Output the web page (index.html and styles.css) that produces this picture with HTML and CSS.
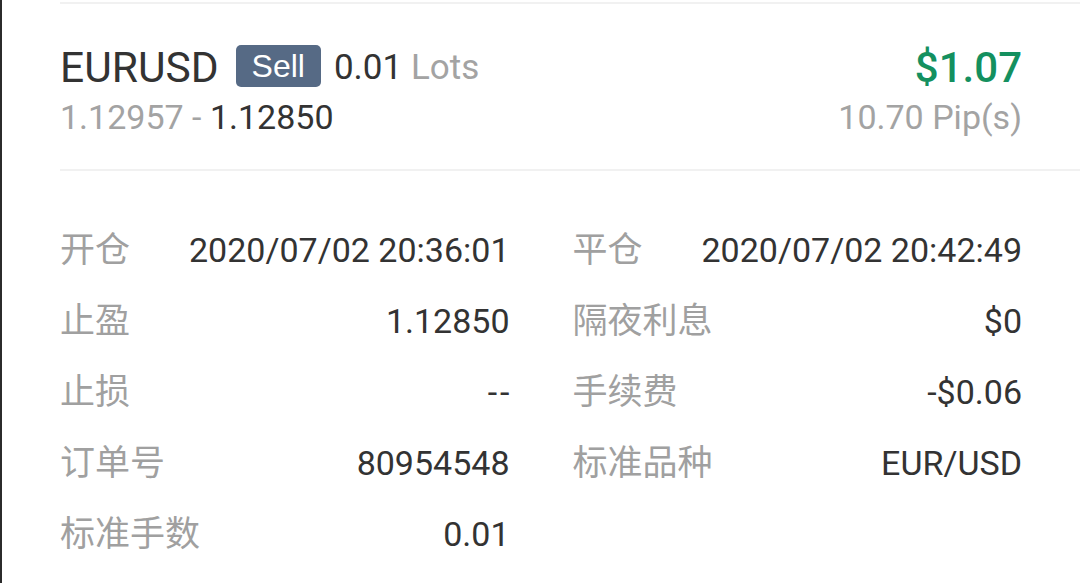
FILE: index.html
```html
<!DOCTYPE html>
<html lang="zh-CN">
<head>
<meta charset="utf-8">
<title>Order detail</title>
<link rel="stylesheet" href="styles.css">
</head>
<body>
<div class="page">
  <section class="summary">
    <div class="sum-left">
      <div class="line1">
        <span class="symbol">EURUSD</span>
        <span class="badge">Sell</span>
        <span class="lots"><span class="dark">0.01</span> Lots</span>
      </div>
      <div class="line2"><span class="grey">1.12957 - </span><span class="dark">1.12850</span></div>
    </div>
    <div class="sum-right">
      <div class="profit">$1.07</div>
      <div class="pips">10.70 Pip(s)</div>
    </div>
  </section>
  <section class="details">
    <div class="row"><span class="label">开仓</span><span class="value">2020/07/02 20:36:01</span></div>
    <div class="row"><span class="label">平仓</span><span class="value">2020/07/02 20:42:49</span></div>
    <div class="row"><span class="label">止盈</span><span class="value">1.12850</span></div>
    <div class="row"><span class="label">隔夜利息</span><span class="value">$0</span></div>
    <div class="row"><span class="label">止损</span><span class="value dash">--</span></div>
    <div class="row"><span class="label">手续费</span><span class="value">-$0.06</span></div>
    <div class="row"><span class="label">订单号</span><span class="value">80954548</span></div>
    <div class="row"><span class="label">标准品种</span><span class="value">EUR/USD</span></div>
    <div class="row"><span class="label">标准手数</span><span class="value">0.01</span></div>
  </section>
</div>
</body>
</html>
```
FILE: styles.css
```css
html, body {
  margin: 0;
  padding: 0;
  background: #ffffff;
}
body {
  font-family: Roboto, "Noto Sans CJK SC", sans-serif;
  color: #333333;
  border-left: 2px solid #2b2b2b;
  min-height: 583px;
  box-sizing: border-box;
  overflow: hidden;
}
.page {
  padding-top: 2px;
}
.summary {
  margin-left: 58px;
  padding: 39px 58px 32px 0;
  border-top: 2px solid #f1f1f1;
  border-bottom: 2px solid #f1f1f1;
  display: flex;
  justify-content: space-between;
}
.line1 {
  display: flex;
  align-items: center;
  height: 50px;
}
.symbol {
  font-size: 42.5px;
  color: #333333;
  line-height: 50px;
}
.badge {
  font-family: "Liberation Sans", Arial, sans-serif;
  font-size: 32px;
  line-height: 42px;
  height: 42px;
  padding: 0 16px;
  margin: 0 13px 4px 17px;
  background: #566a85;
  color: #ffffff;
  border-radius: 5px;
}
.lots {
  font-size: 35px;
  color: #a3a3a3;
  line-height: 50px;
}
.dark { color: #333333; }
.grey { color: #a3a3a3; }
.line2 {
  margin-top: 4px;
  font-size: 34px;
  line-height: 40px;
  white-space: pre;
}
.sum-right {
  text-align: right;
}
.profit {
  font-size: 42px;
  font-weight: 500;
  color: #14905f;
  line-height: 50px;
}
.pips {
  margin-top: 4px;
  font-size: 34px;
  line-height: 40px;
  color: #a3a3a3;
}
.details {
  padding: 44px 58px 0 58px;
  display: grid;
  grid-template-columns: 1fr 1fr;
  column-gap: 63px;
}
.row {
  display: flex;
  justify-content: space-between;
  height: 71px;
  line-height: 71px;
  font-size: 34px;
}
.label {
  color: #a0a0a0;
  font-size: 35px;
}
.value {
  color: #333333;
}
.dash {
  letter-spacing: 3px;
  margin-right: -3px;
}
```
